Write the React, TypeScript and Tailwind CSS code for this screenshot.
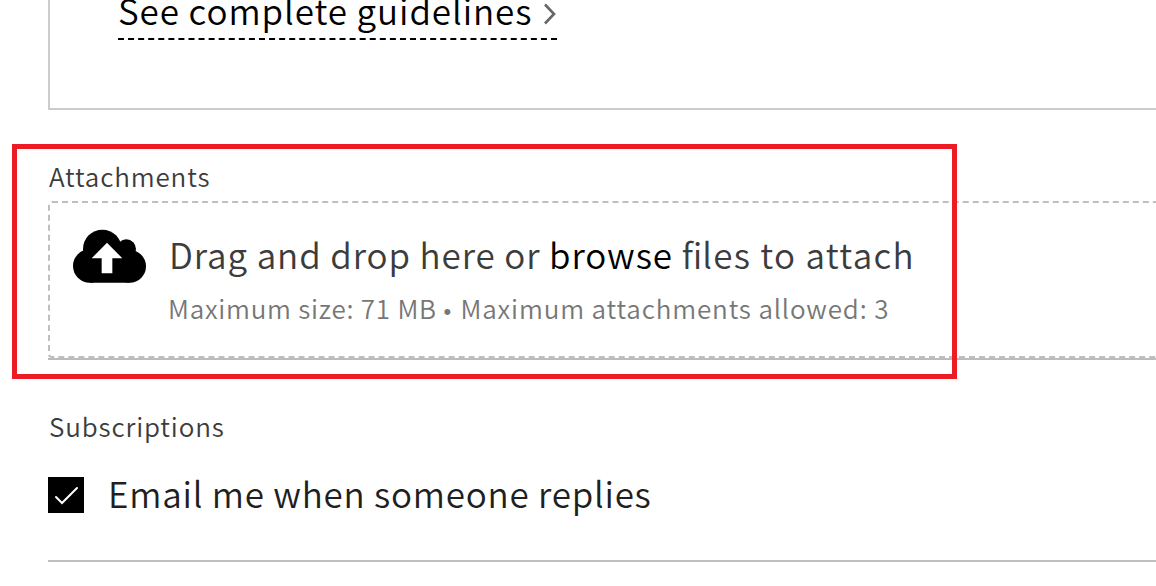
import React from 'react';

interface SectionLabelProps {
    children: React.ReactNode;
}

const CloudUploadIcon: React.FC<{ className?: string }> = ({ className }) => (
    <svg className={className} viewBox="0 0 219 162" fill="black" aria-hidden="true">
        <circle cx="88" cy="60" r="58" />
        <circle cx="160" cy="60" r="29" />
        <circle cx="50" cy="111" r="50" />
        <circle cx="170" cy="112" r="49" />
        <path d="M50 60h120v101H50z" />
        <path d="M102 41l46 47h-30v45H86V88H56z" fill="white" />
    </svg>
);

const ChevronIcon: React.FC<{ className?: string }> = ({ className }) => (
    <svg className={className} viewBox="0 0 12 22" fill="none" stroke="#666" strokeWidth="2.6" aria-hidden="true">
        <path d="M1 1.5l9 9.5-9 9.5" />
    </svg>
);

const CheckIcon: React.FC<{ className?: string }> = ({ className }) => (
    <svg className={className} viewBox="0 0 36 36" fill="none" stroke="white" strokeWidth="2" strokeLinecap="round" aria-hidden="true">
        <path d="M8 20l6 6 15-15" />
    </svg>
);

const SectionLabel: React.FC<SectionLabelProps> = ({ children }) => (
    <h2 className="pb-[1px] pl-[1px] text-[26px] leading-[32px] tracking-[0.85px] text-[#3c3c3c] whitespace-nowrap">{children}</h2>
);

export default function App() {
    return (
        <div className="relative h-[586px] w-full overflow-hidden bg-white pl-12 font-['Noto_Sans_CJK_SC',sans-serif] font-[350]">
            {/* Guidelines panel */}
            <section className="h-[110px] border-l-2 border-b-2 border-[#ccc] pl-[68px]">
                <a className="flex h-10 w-[439px] items-end justify-between border-b-2 border-dashed border-black text-black">
                    <span className="mb-[12px] text-[35px] leading-[33px] tracking-[0.92px] whitespace-nowrap">See complete guidelines</span>
                    <ChevronIcon className="mb-[13px] mr-[1px] h-[22px] w-3" />
                </a>
            </section>

            {/* Attachments */}
            <section className="pt-[50px]">
                <SectionLabel>Attachments</SectionLabel>
                <div className="-mr-2 mt-2 border-b-2 border-[#bbb]">
                    <div className="flex h-[157px] rounded-[4px] border-2 border-dashed border-[#bfbfbf] pl-[23px] pt-[26px]">
                        <CloudUploadIcon className="h-[54px] w-[73px] shrink-0" />
                        <div className="-mt-[1px] ml-[22px] whitespace-nowrap">
                            <p className="pl-[1px] text-[35px] leading-[52px] tracking-[0.9px] text-[#3c3c3c]">
                                Drag and drop here or <span className="text-black">browse</span>{' '}
                                <span className="tracking-[1.3px]"><span className="tracking-normal">fi</span>les to attach</span>
                            </p>
                            <p className="mt-[3px] text-[26px] leading-[50px] tracking-[0.85px] text-[#777]">
                                <span className="tracking-[0.75px]">Maximum size: 71 MB</span>{' '}
                                <span className="mr-[2px] font-['Liberation_Sans'] text-[22px] tracking-[0.7px]">•</span>{' '}
                                Maximum attachments allowed: 3
                            </p>
                        </div>
                    </div>
                </div>
            </section>

            {/* Subscriptions */}
            <section className="pt-[50px]">
                <SectionLabel>Subscriptions</SectionLabel>
                <label className="mt-[34px] flex h-9 items-center">
                    <span className="h-9 w-9 bg-black">
                        <CheckIcon className="h-9 w-9" />
                    </span>
                    <span className="-mt-[5px] ml-6 text-[35px] leading-[48px] tracking-[0.76px] text-[#1f1f1f] whitespace-nowrap">
                        Email me when someone replies
                    </span>
                </label>
                <hr className="mt-[47px] border-t-2 border-[#bfbfbf]" />
            </section>

            {/* Highlight frame over the attachments area */}
            <div className="pointer-events-none absolute left-3 top-36 h-[235px] w-[945px] border-5 border-[#ed1c24]" />
        </div>
    );
}
